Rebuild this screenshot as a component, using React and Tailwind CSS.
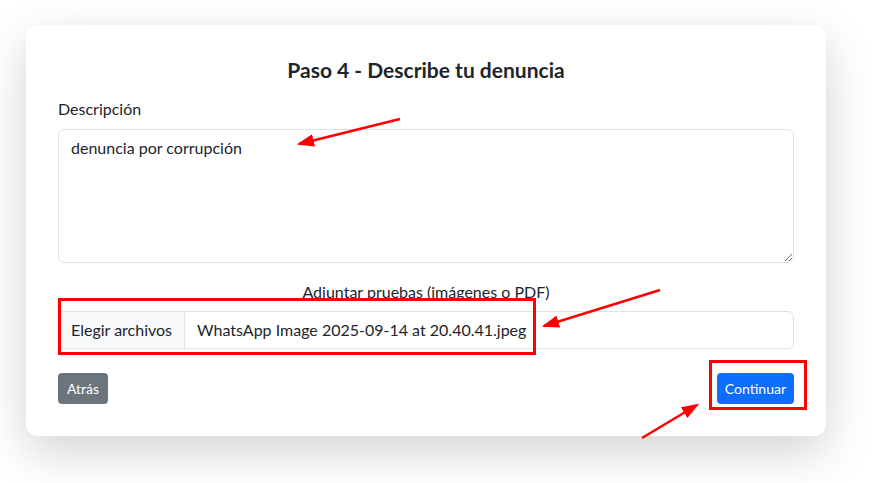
export default function App() {
  return (
    <div className="relative min-h-[483px] bg-white font-['Lato',sans-serif] text-[#212529]">
      <div className="pt-[25px] pl-[26px]">
        <div className="w-[800px] rounded-xl bg-white px-8 pt-[33px] pb-8 shadow-[0_1rem_3rem_rgba(0,0,0,0.175)]">
          <h4 className="mb-[15px] text-center text-[21px] font-bold leading-[24px]">Paso 4 - Describe tu denuncia</h4>

          <label className="mb-2 block text-[16px] leading-[24px]">Descripción</label>
          <textarea
            className="block h-[134px] w-full resize-y rounded-md border border-[#dee2e6] px-3 py-[6px] text-[16px] leading-[24px] text-[#212529] outline-none"
            defaultValue="denuncia por corrupción"
          />

          <label className="mt-[17px] mb-[7px] block text-center text-[16px] leading-[24px]">Adjuntar pruebas (imágenes o PDF)</label>
          <div className="flex h-[38px] w-full overflow-hidden rounded-md border border-[#dee2e6] text-[16px] leading-[24px]">
            <span className="flex items-center border-r border-[#dee2e6] bg-[#f8f9fa] px-3">Elegir archivos</span>
            <span className="flex items-center px-3">WhatsApp Image 2025-09-14 at 20.40.41.jpeg</span>
          </div>

          <div className="mt-6 flex items-center justify-between">
            <button className="h-[31px] rounded bg-[#6c757d] px-[9px] text-[14px] text-white">Atrás</button>
            <button className="h-[31px] rounded bg-[#0d6efd] px-2 text-[14px] text-white">Continuar</button>
          </div>
        </div>
      </div>

      {/* annotations */}
      <div className="pointer-events-none absolute left-[58px] top-[298px] h-[57px] w-[478px] border-[3px] border-[#ff0000]" />
      <div className="pointer-events-none absolute left-[709px] top-[360px] h-[50px] w-[98px] border-[3px] border-[#ff0000]" />
      <svg className="pointer-events-none absolute left-0 top-0" width="884" height="483">
        <defs>
          <marker id="ah" markerWidth="7" markerHeight="5" refX="6" refY="2.5" orient="auto" markerUnits="strokeWidth">
            <path d="M0,0 L7,2.5 L0,5 Z" fill="#ff0000" />
          </marker>
        </defs>
        <line x1="400" y1="119" x2="299" y2="144" stroke="#ff0000" strokeWidth="2.5" markerEnd="url(#ah)" />
        <line x1="660" y1="290" x2="544" y2="326" stroke="#ff0000" strokeWidth="2.5" markerEnd="url(#ah)" />
        <line x1="642" y1="438" x2="697" y2="405" stroke="#ff0000" strokeWidth="2.5" markerEnd="url(#ah)" />
      </svg>
    </div>
  );
}
